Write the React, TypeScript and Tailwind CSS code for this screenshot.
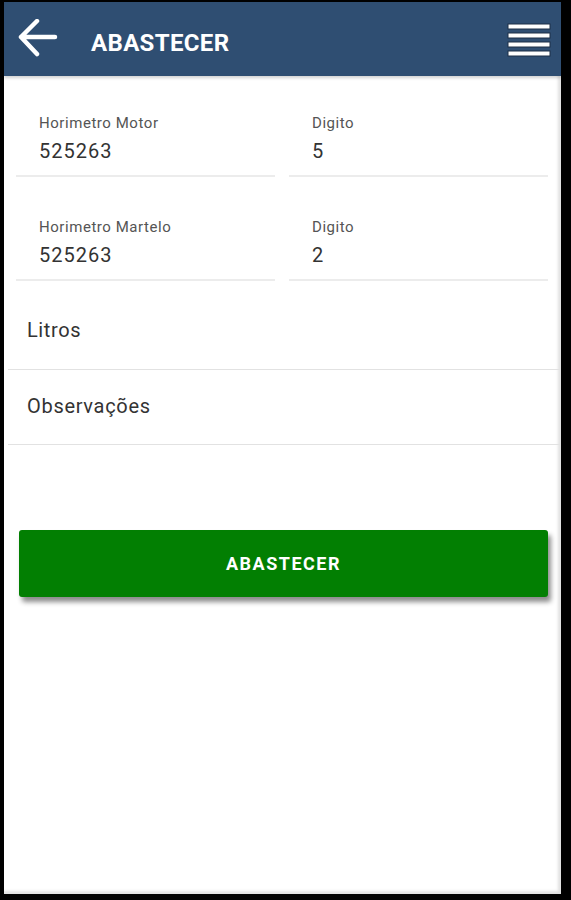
import React from "react";

function Field({ label, value }: { label: string; value: string }) {
  return (
    <div className="border-b-2 border-[#ececec] pl-[23px] pb-[12px]">
      <div className="text-[15px] leading-[16px] tracking-[0.55px] text-[#555555]">{label}</div>
      <div className="mt-[8px] text-[20px] leading-[24px] tracking-[1px] text-[#333333]">{value}</div>
    </div>
  );
}

export default function App() {
  return (
    <div
      className="h-[900px] w-[571px] bg-black pl-[4px] pr-[10px] pt-[2px] pb-[6px]"
      style={{ fontFamily: "Roboto, 'Noto Sans', sans-serif" }}
    >
      <div className="flex h-full flex-col bg-white shadow-[inset_-3px_-3px_3px_rgba(0,0,0,0.12)]">
        <header className="flex h-[74px] items-center bg-[#2f4e72] shadow-[0_2px_3px_rgba(0,0,0,0.18)]">
          <svg width="40" height="40" viewBox="0 0 40 40" className="ml-[14px]">
            <path
              d="M3 18 H37 M19 2 L3 18 L19 35"
              fill="none"
              stroke="white"
              strokeWidth="4.5"
              strokeLinecap="round"
              strokeLinejoin="round"
            />
          </svg>
          <h1 className="ml-[33px] mt-[8px] text-[24px] font-bold leading-[28px] tracking-[0.35px] text-white">
            ABASTECER
          </h1>
          <svg width="44" height="36" viewBox="0 0 44 36" className="ml-auto mr-[10px] mt-[4px]">
            {[1, 10, 19, 28].map((y) => (
              <rect
                key={y}
                x="1"
                y={y}
                width="42"
                height="5"
                fill="white"
                stroke="#1c2f46"
                strokeWidth="1"
              />
            ))}
          </svg>
        </header>

        <div className="grid grid-cols-2 gap-x-[14px] pl-[12px] pr-[13px] pt-[39px]">
          <Field label="Horimetro Motor" value="525263" />
          <Field label="Digito" value="5" />
        </div>
        <div className="grid grid-cols-2 gap-x-[14px] pl-[12px] pr-[13px] pt-[42px]">
          <Field label="Horimetro Martelo" value="525263" />
          <Field label="Digito" value="2" />
        </div>

        <div className="ml-[4px] border-b border-[#e2e2e2] pl-[19px] pt-[37px] pb-[27px] text-[20px] leading-[24px] tracking-[0.6px] text-[#333333]">
          Litros
        </div>
        <div className="ml-[4px] border-b border-[#e2e2e2] pl-[19px] pt-[24px] pb-[26px] text-[20px] leading-[24px] tracking-[0.7px] text-[#333333]">
          Observações
        </div>

        <button
          type="button"
          className="ml-[15px] mr-[13px] mt-[85px] flex h-[67px] items-center justify-center rounded-[3px] bg-[#027f02] text-[18px] font-bold tracking-[1.5px] text-white shadow-[3px_5px_5px_rgba(0,0,0,0.45)]"
        >
          ABASTECER
        </button>
      </div>
    </div>
  );
}
